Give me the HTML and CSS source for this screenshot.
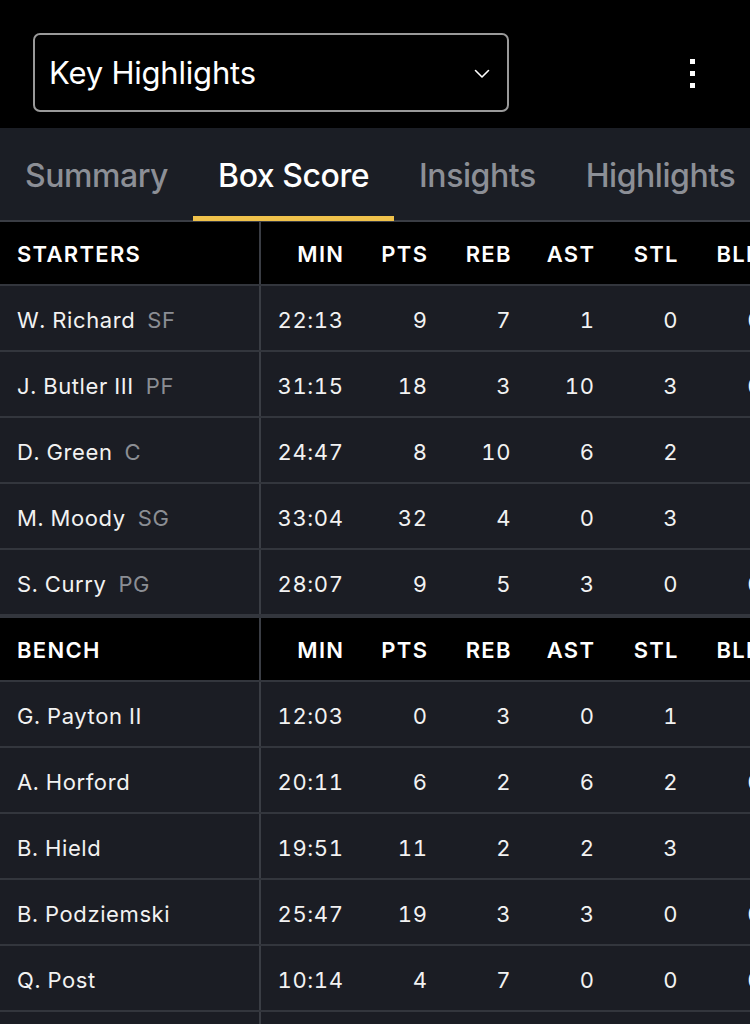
FILE: index.html
```html
<!DOCTYPE html>
<html>
<head>
<meta charset="utf-8">
<link rel="stylesheet" href="styles.css">
</head>
<body>
<div class="topbar">
  <div class="select">
    <span class="select-label">Key Highlights</span>
    <svg class="chev" width="16" height="10" viewBox="0 0 16 10"><path d="M1.5 1.5 L8 8 L14.5 1.5" fill="none" stroke="#fff" stroke-width="1.6" stroke-linecap="round" stroke-linejoin="round"/></svg>
  </div>
  <div class="kebab"><i></i><i></i><i></i></div>
</div>
<div class="tabs">
  <div class="tab">Summary</div>
  <div class="tab active">Box Score</div>
  <div class="tab">Insights</div>
  <div class="tab">Highlights</div>
</div>
<div class="table">
  <div class="row head"><div class="name">STARTERS</div><div>MIN</div><div>PTS</div><div>REB</div><div>AST</div><div>STL</div><div>BLK</div></div>
  <div class="row"><div class="name">W. Richard<span class="pos">SF</span></div><div>22:13</div><div>9</div><div>7</div><div>1</div><div>0</div><div>0</div></div>
  <div class="row"><div class="name">J. Butler III<span class="pos">PF</span></div><div>31:15</div><div>18</div><div>3</div><div>10</div><div>3</div><div>0</div></div>
  <div class="row"><div class="name">D. Green<span class="pos">C</span></div><div>24:47</div><div>8</div><div>10</div><div>6</div><div>2</div><div>1</div></div>
  <div class="row"><div class="name">M. Moody<span class="pos">SG</span></div><div>33:04</div><div>32</div><div>4</div><div>0</div><div>3</div><div>1</div></div>
  <div class="row last"><div class="name">S. Curry<span class="pos">PG</span></div><div>28:07</div><div>9</div><div>5</div><div>3</div><div>0</div><div>0</div></div>
  <div class="row head"><div class="name">BENCH</div><div>MIN</div><div>PTS</div><div>REB</div><div>AST</div><div>STL</div><div>BLK</div></div>
  <div class="row"><div class="name">G. Payton II</div><div>12:03</div><div>0</div><div>3</div><div>0</div><div>1</div><div>1</div></div>
  <div class="row"><div class="name">A. Horford</div><div>20:11</div><div>6</div><div>2</div><div>6</div><div>2</div><div>0</div></div>
  <div class="row"><div class="name">B. Hield</div><div>19:51</div><div>11</div><div>2</div><div>2</div><div>3</div><div>1</div></div>
  <div class="row"><div class="name">B. Podziemski</div><div>25:47</div><div>19</div><div>3</div><div>3</div><div>0</div><div>0</div></div>
  <div class="row"><div class="name">Q. Post</div><div>10:14</div><div>4</div><div>7</div><div>0</div><div>0</div><div>0</div></div>
</div>
</body>
</html>
```

FILE: styles.css
```css
* { box-sizing: border-box; }
html, body { margin: 0; padding: 0; }
body {
  width: 750px;
  height: 1024px;
  overflow: hidden;
  background: #1b1d24;
  font-family: Inter, "Noto Sans", sans-serif;
  color: #f2f2f2;
  background-image: linear-gradient(#3a3d44, #3a3d44);
  background-size: 2px 100%;
  background-position: 259px 0;
  background-repeat: no-repeat;
}
.topbar {
  height: 128px;
  background: #000;
  display: flex;
  align-items: flex-start;
  padding: 33px 0 0 33px;
}
.select {
  width: 476px;
  height: 79px;
  border: 2px solid #9a9a9a;
  border-radius: 7px;
  display: flex;
  align-items: center;
  justify-content: space-between;
  padding: 0 17px 0 14px;
}
.select-label {
  font-size: 31px;
  color: #fff;
  letter-spacing: -0.2px;
}
.chev { display: block; margin-top: 2px; }
.kebab {
  margin-left: 181px;
  margin-top: 26px;
  display: flex;
  flex-direction: column;
  gap: 7px;
}
.kebab i {
  display: block;
  width: 5px;
  height: 5px;
  background: #fff;
}
.tabs {
  height: 94px;
  background: #1b1e25;
  border-bottom: 2px solid #3a3d44;
  display: flex;
  white-space: nowrap;
}
.tab {
  position: relative;
  padding: 2px 25px 0;
  display: flex;
  align-items: center;
  font-size: 32px;
  color: #8c8f96;
  letter-spacing: -0.45px;
  font-weight: 500;
}
.tab.active { color: #fff; }
.tab.active::after {
  content: "";
  position: absolute;
  left: 0;
  right: 0;
  bottom: -1px;
  height: 5px;
  background: #f0c24b;
}
.table { width: 750px; }
.row {
  display: grid;
  grid-template-columns: 261px 82px 84px 83.5px 83.5px 83.5px 84px;
  height: 66px;
  border-bottom: 2px solid #33363d;
  font-size: 22px;
  letter-spacing: 0.6px;
  font-variant-numeric: tabular-nums;
  white-space: nowrap;
  background: #1b1d24;
}
.row > div {
  display: flex;
  align-items: center;
  justify-content: flex-end;
  padding-top: 4px;
  margin-right: -0.6px;
}
.row > div:last-child { font-variant-numeric: normal; }
.row > .name {
  justify-content: flex-start;
  padding-left: 17px;
  border-right: 2px solid #3a3d44;
  margin-right: 0;
}
.row.head {
  height: 64px;
  background: #000;
  font-weight: 600;
  font-size: 22px;
  letter-spacing: 1.3px;
  color: #fff;
}
.row.head > div { padding-top: 1px; margin-right: -1.3px; }
.row.head > .name { margin-right: 0; }
.row.last { height: 68px; border-bottom: 4px solid #33363d; }
.pos {
  color: #8b8e94;
  margin-left: 12px;
}
```
